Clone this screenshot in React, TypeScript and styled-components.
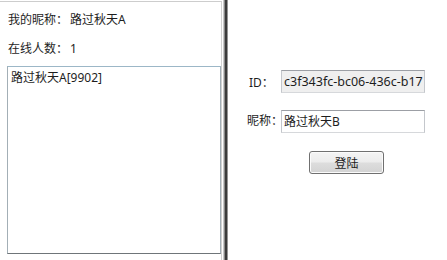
import React from 'react'
import styled, { createGlobalStyle } from 'styled-components'

const GlobalStyle = createGlobalStyle`
  html, body {
    margin: 0;
    padding: 0;
    background: #ffffff;
  }
  body {
    font-family: "Noto Sans", "Noto Sans CJK SC", sans-serif;
    font-size: 12px;
    color: #1e1e1e;
  }
`

const Window = styled.div`
  display: flex;
  width: 447px;
  height: 260px;
  overflow: hidden;
  background: #ffffff;
`

const LeftPanel = styled.div`
  display: flex;
  flex-direction: column;
  width: 222px;
  margin-top: 1px;
  padding: 10px 0 0 7px;
  box-sizing: border-box;
  border-top: 1px solid #cdcdcd;
  border-right: 1px solid #d2d2d2;
`

const InfoRow = styled.div<{ $gap: number }>`
  display: flex;
  align-items: center;
  height: 16px;
  padding-left: 1px;
  margin-bottom: ${p => p.$gap}px;
  line-height: 16px;
`

const InfoLabel = styled.span`
  width: 62px;
`

const ListBox = styled.div`
  height: 188px;
  box-sizing: border-box;
  border: 1px solid;
  border-color: #9cb7c7 #a3afb6 #6f7579 #a3afb6;
  background: #ffffff;
  padding: 2px 0 0 3px;
`

const ListItem = styled.div`
  height: 16px;
  line-height: 16px;
  margin-top: 1px;
  white-space: nowrap;
`

const Splitter = styled.div`
  width: 6px;
  flex-shrink: 0;
  background: linear-gradient(
    to right,
    #ffffff 0 1px,
    #c9c9c9 1px 2px,
    #8a8a8a 2px 3px,
    #3b3b3b 3px 5px,
    #959595 5px 6px
  );
`

const RightPanel = styled.div`
  flex: 1;
  display: flex;
  flex-direction: column;
  padding: 70px 0 0 21px;
  box-sizing: border-box;
`

const FormRow = styled.div<{ $gap: number }>`
  display: flex;
  align-items: center;
  height: 23px;
  margin-bottom: ${p => p.$gap}px;
`

const FormLabel = styled.span<{ $shift?: number; $left?: number }>`
  width: 32px;
  flex-shrink: 0;
  white-space: nowrap;
  position: relative;
  top: ${p => p.$shift ?? 0}px;
  left: ${p => p.$left ?? 0}px;
`

const TextBox = styled.div<{ $readonly?: boolean }>`
  width: 144px;
  height: 23px;
  box-sizing: border-box;
  border: 1px solid;
  border-color: #9c9fa5 #c4c7cc #d6d8db #c4c7cc;
  background: ${p => (p.$readonly ? '#efefef' : '#ffffff')};
  padding: 0 0 0 2px;
  line-height: 21px;
  white-space: nowrap;
  overflow: hidden;
  font-size: ${p => (p.$readonly ? '12.5px' : '12px')};
`

const LoginButton = styled.button`
  width: 75px;
  height: 23px;
  margin-left: 60px;
  border: 1px solid #707070;
  border-radius: 3px;
  background: linear-gradient(to bottom, #f4f4f4 0%, #ececec 48%, #dddddd 52%, #d3d3d3 100%);
  font-family: "Noto Sans", "Noto Sans CJK SC", sans-serif;
  font-size: 12px;
  color: #1e1e1e;
  padding: 0;
  box-shadow: inset 0 0 0 1px #fbfbfb;
`

const App = () => {
  const users = ['路过秋天A[9902]']

  return (
    <>
      <GlobalStyle />
      <Window>
        <LeftPanel>
          <InfoRow $gap={13}>
            <InfoLabel>我的昵称：</InfoLabel>
            <span>路过秋天A</span>
          </InfoRow>
          <InfoRow $gap={9}>
            <InfoLabel>在线人数：</InfoLabel>
            <span>{users.length}</span>
          </InfoRow>
          <ListBox>
            {users.map((u, i) => (
              <ListItem key={i}>{u}</ListItem>
            ))}
          </ListBox>
        </LeftPanel>
        <Splitter />
        <RightPanel>
          <FormRow $gap={17}>
            <FormLabel>ID：</FormLabel>
            <TextBox $readonly>c3f343fc-bc06-436c-b17</TextBox>
          </FormRow>
          <FormRow $gap={18}>
            <FormLabel $shift={-2} $left={-2}>昵称：</FormLabel>
            <TextBox>路过秋天B</TextBox>
          </FormRow>
          <LoginButton>登陆</LoginButton>
        </RightPanel>
      </Window>
    </>
  )
}

export default App
